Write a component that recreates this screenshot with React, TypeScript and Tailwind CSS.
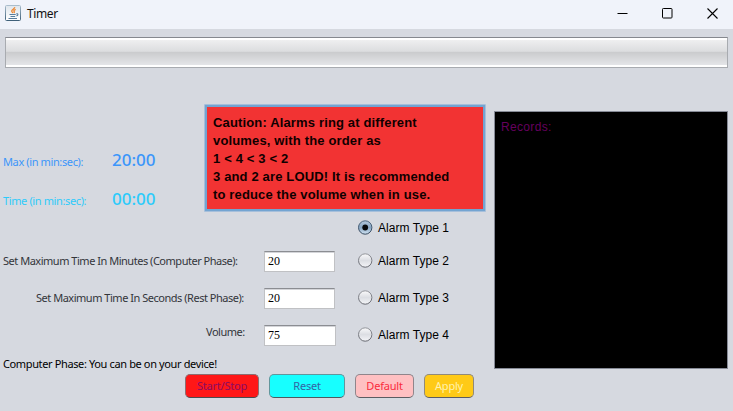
import React from "react";

function JavaIcon() {
  return (
    <svg width="16" height="16" viewBox="0 0 16 16" fill="none" className="shrink-0">
      <defs>
        <linearGradient id="frame" x1="0" y1="0" x2="0" y2="1">
          <stop offset="0" stopColor="#a9bdcc" />
          <stop offset="1" stopColor="#3f6079" />
        </linearGradient>
        <linearGradient id="face" x1="0" y1="0" x2="0" y2="1">
          <stop offset="0" stopColor="#dfe6ec" />
          <stop offset="1" stopColor="#ffffff" />
        </linearGradient>
      </defs>
      <rect x="0.5" y="0.5" width="15" height="15" rx="1" fill="url(#face)" stroke="url(#frame)" />
      <path d="M9.700 2.200c.3 1.700-3.300 2.300-3 4 .1.700.9 1.100 1.100 1.900M10.700 4.300C9 5 8.400 5.700 9.200 6.500c.4.500.1 1.100-.4 1.500" stroke="#ec8630" strokeWidth="1.300" />
      <path d="M4.500 9.500h6.200M5.500 11.500h4.700M11.300 8.900c2-.6 2.200 1.300.1 2.200M3.500 13.500h8.500" stroke="#587d9c" strokeWidth="1.100" />
    </svg>
  );
}

function TitleBar() {
  return (
    <header className="flex h-[29px] items-center bg-[#f0f3fa] pl-[5px] pr-[15px] pb-[3px]">
      <JavaIcon />
      <span className="ml-[6px] pt-px text-[12px] leading-4 text-[#111] tracking-[-0.4px]">Timer</span>
      <div className="ml-auto flex items-center gap-[34px] text-black">
        <svg width="11" height="11" viewBox="0 0 11 11">
          <path d="M0.500 5.500h10" stroke="currentColor" />
        </svg>
        <svg width="11" height="11" viewBox="0 0 11 11" fill="none">
          <rect x="0.500" y="0.500" width="9.500" height="9.500" rx="0.800" stroke="currentColor" />
        </svg>
        <svg width="11" height="11" viewBox="0 0 11 11">
          <path d="M0.500 0.500l10 10M10.500 0.500l-10 10" stroke="currentColor" strokeWidth="1.100" />
        </svg>
      </div>
    </header>
  );
}

function Radio({ n, checked }: { n: number; checked?: boolean }) {
  const id = `radio-${n}`;
  return (
    <label className="flex items-center gap-[5px] font-['Liberation_Sans',Arial,sans-serif] text-[12px] leading-4 text-black">
      <svg width="15" height="15" viewBox="0 0 15 15" className="shrink-0">
        <defs>
          <linearGradient id={id} x1="0" y1="0" x2="0" y2="1">
            <stop offset="0" stopColor={checked ? "#b4c9dd" : "#fafafb"} />
            <stop offset="0.500" stopColor={checked ? "#87a5c3" : "#dcdee3"} />
            <stop offset="1" stopColor={checked ? "#d2e4f3" : "#f4f5f8"} />
          </linearGradient>
          <linearGradient id={`${id}-rim`} x1="0" y1="0" x2="0" y2="1">
            <stop offset="0" stopColor={checked ? "#4d6680" : "#93959b"} />
            <stop offset="1" stopColor={checked ? "#34475c" : "#64666e"} />
          </linearGradient>
        </defs>
        <circle cx="7.200" cy="7.500" r="6.700" fill={`url(#${id})`} stroke={`url(#${id}-rim)`} />
        {checked && <circle cx="7.200" cy="7.500" r="2.900" fill="#080a0d" />}
      </svg>
      <span className={checked ? "tracking-[0.050px]" : "pt-[2px] tracking-[0.050px]"}>Alarm Type {n}</span>
    </label>
  );
}

function Field({ value, width }: { value: string; width: string }) {
  return (
    <div
      className={`${width} h-[21px] border border-[#c0c1c4] border-t-[#8b8d92] bg-white pl-[3px] font-['Liberation_Serif','Times_New_Roman',serif] text-[12px] leading-[19px] text-black shadow-[inset_0_1px_0_#d4d5d9]`}
    >
      {value}
    </div>
  );
}

export default function App() {
  return (
    <div className="flex h-[411px] w-[733px] flex-col overflow-hidden bg-[#d6d9e0] font-['Noto_Sans','Open_Sans',sans-serif]">
      <TitleBar />
      <div className="px-[5px] pt-2">
        <div className="h-[31px] border border-[#a8abb0] border-t-[#85888e] bg-white py-[2px]">
          <div className="h-full bg-[linear-gradient(#efeff0_0%,#dcdddf_45%,#cbccce_50%,#e4e5e8_100%)]" />
        </div>
      </div>

      <div className="flex flex-1">
        <main className="flex w-[494px] flex-col">
          <section className="flex pt-9">
            <div className="flex w-[204px] flex-col gap-[11px] pt-[41px] pl-[3px]">
              <div className="flex h-7 items-center text-[#3c96fa]">
                <span className="w-[109px] whitespace-nowrap pt-[6px] text-[11px] tracking-[-0.380px]">Max (in min:sec):</span>
                <span className="pt-px text-[17px] font-medium tracking-[0px]">20:00</span>
              </div>
              <div className="flex h-7 items-center text-[#2ecbfb]">
                <span className="w-[109px] whitespace-nowrap pt-[7px] text-[11px] tracking-[-0.380px]">Time (in min:sec):</span>
                <span className="pt-px text-[17px] font-medium tracking-[0px]">00:00</span>
              </div>
            </div>
            <div className="h-[108px] w-[282px] rounded-[1px] border border-[#a6bfdb] bg-[#73a4d1] p-[2px]">
              <p className="h-full bg-[#f23333] pt-[7px] pl-[6px] font-['Liberation_Sans',Arial,sans-serif] text-[13px] font-bold leading-[18px] tracking-[0.150px] text-[#100000]">
                Caution: Alarms ring at different
                <br />
                volumes, with the order as
                <br />
                1 &lt; 4 &lt; 3 &lt; 2<br />
                3 and 2 are LOUD! It is recommended
                <br />
                to reduce the volume when in use.
              </p>
            </div>
          </section>

          <section className="flex h-[141px]">
            <div className="grid w-[264px] grid-rows-[36px_37px_37px] items-center pt-[31px] text-[11px] text-[#33353a]">
              <span className="whitespace-nowrap pl-[3px] tracking-[-0.480px]">Set Maximum Time In Minutes (Computer Phase):</span>
              <span className="whitespace-nowrap pl-[36px] pt-[2px] tracking-[-0.480px]">Set Maximum Time In Seconds (Rest Phase):</span>
              <span className="whitespace-nowrap pl-[206px] pb-[5px] tracking-[-0.480px]">Volume:</span>
            </div>
            <div className="grid w-[94px] grid-rows-[36px_38px_36px] items-center pt-[31px]">
              <Field value="20" width="w-[71px]" />
              <Field value="20" width="w-[71px]" />
              <Field value="75" width="w-[72px]" />
            </div>
            <div className="grid grid-rows-[31px_34px_40px_34px] items-center">
              <Radio n={1} checked />
              <Radio n={2} />
              <Radio n={3} />
              <Radio n={4} />
            </div>
          </section>

          <p className="h-[21px] whitespace-nowrap pl-[3px] text-[11px] leading-[21px] tracking-[-0.370px] text-black">
            Computer Phase: You can be on your device!
          </p>
          <div className="flex gap-[10px] pl-[185px] text-[11px] leading-[22px] tracking-[-0.200px]">
            <button className="h-6 w-[74px] rounded-[5px] border border-[#8d6c70] border-b-[#4a4c50] bg-[#ff1717] text-[#8d0b63]">Start/Stop</button>
            <button className="h-6 w-[76px] rounded-[5px] border border-[#62969c] border-b-[#4a5b60] bg-[#17ffff] text-[#3464a4]">Reset</button>
            <button className="h-6 w-[59px] rounded-[5px] border border-[#90858b] border-b-[#5b5c62] bg-[#ffc0c2] text-[#fa2b3c]">Default</button>
            <button className="h-6 w-[50px] rounded-[5px] border border-[#918a79] border-b-[#5b5c62] bg-[#ffca17] text-[#fff3b0]">Apply</button>
          </div>
        </main>

        <aside className="mt-[43px] h-[258px] w-[234px] border border-[#868a96] bg-black pt-[7px] pl-[6px] font-['Liberation_Sans',Arial,sans-serif] text-[12px] leading-4 tracking-[0.330px] text-[#66005f]">
          Records:
        </aside>
      </div>
    </div>
  );
}
